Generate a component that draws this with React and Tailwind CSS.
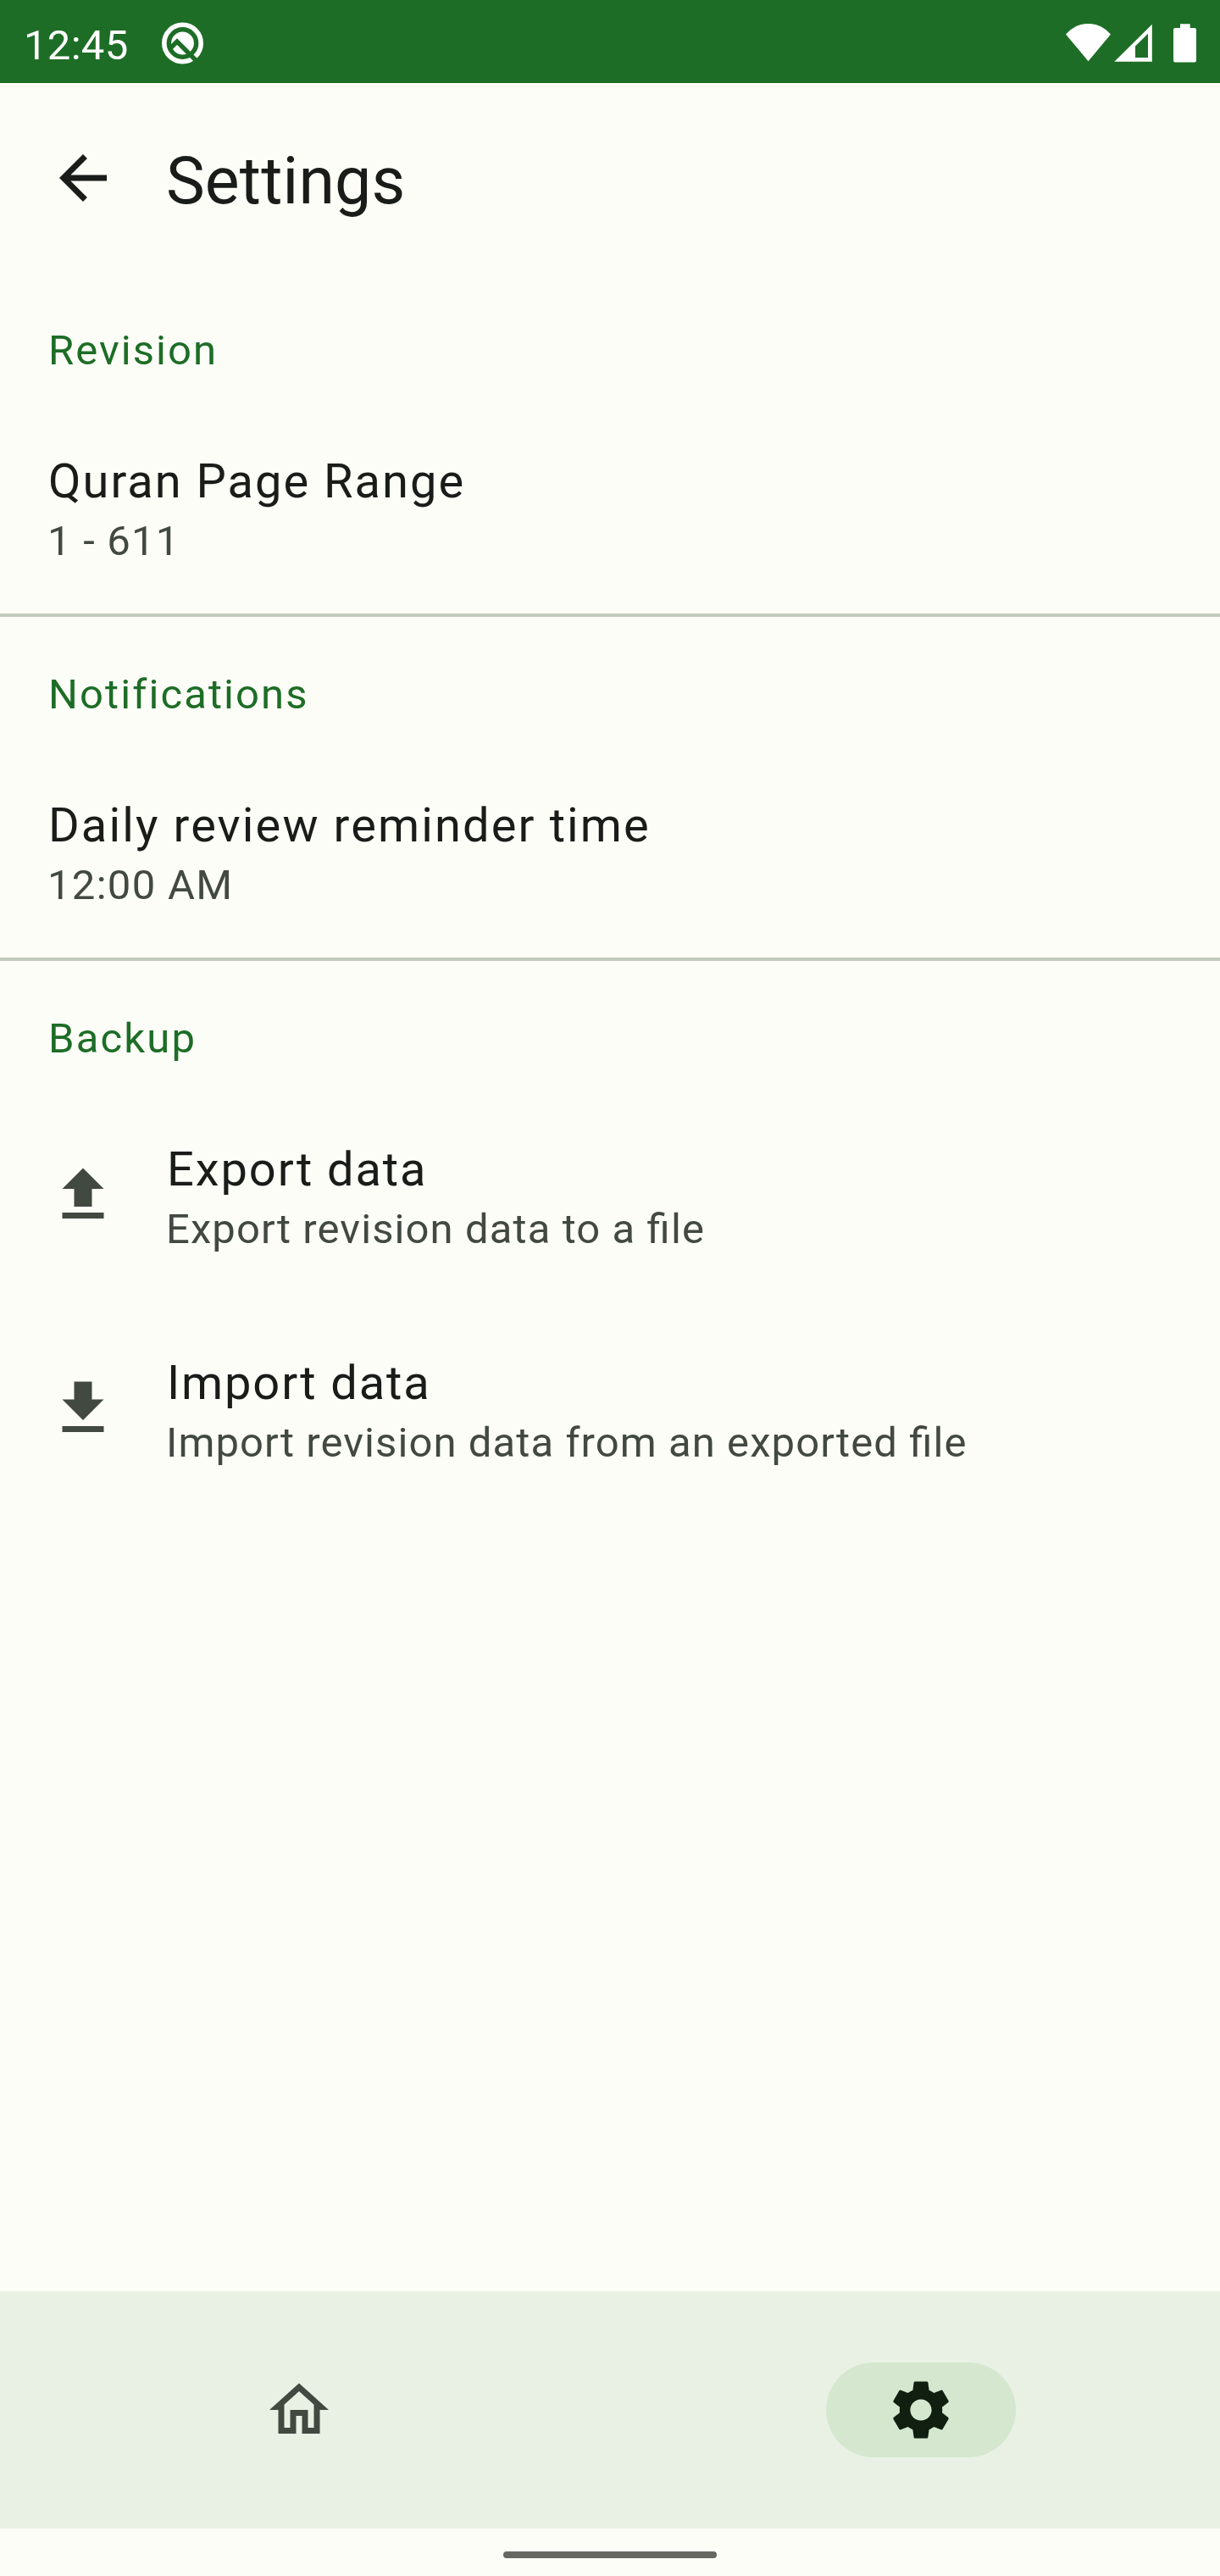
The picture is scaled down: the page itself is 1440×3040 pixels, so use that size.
function StatusBar() {
  return (
    <header className="flex h-[98px] items-start justify-between bg-[#1d6d26] text-white">
      <div className="flex items-start pl-[28px]">
        <span className="mt-[19px] w-[163px] text-[49px] leading-[70px] tracking-[0.3px]">12:45</span>
        <svg className="mt-[26px] h-[50px] w-[49px]" viewBox="0 0 49 50" fill="none">
          <circle cx="24.5" cy="25" r="21.7" stroke="currentColor" strokeWidth="5.6" />
          <circle cx="24.5" cy="25" r="13.4" fill="currentColor" />
          <path d="M10.5 30.5 18 23l28 28" stroke="#1d6d26" strokeWidth="5.4" />
        </svg>
      </div>
      <div className="flex items-start pr-[28px] pt-[28px]">
        <svg className="h-[45px] w-[53px]" viewBox="0 0 53 45" fill="currentColor">
          <path d="M0 12.4a34.3 34.3 0 0 1 53 0L26.5 44.3z" />
        </svg>
        <svg className="ml-[4px] h-[45px] w-[45px]" viewBox="0 0 45 45" fill="currentColor" fillRule="evenodd">
          <path d="M.3 44.7H44.8V.7zM25 26.5 40 11.7V40H25z" />
        </svg>
        <svg className="ml-[25px] h-[46px] w-[27px]" viewBox="0 0 27 46" fill="currentColor">
          <path d="M8 .3h11.7V5H25a2 2 0 0 1 2 2v36.6a2 2 0 0 1-2 2H2a2 2 0 0 1-2-2V7a2 2 0 0 1 2-2h6z" />
        </svg>
      </div>
    </header>
  );
}

function Icon({ path }) {
  return (
    <svg className="h-[84px] w-[84px] shrink-0" viewBox="0 0 24 24" fill="currentColor">
      <path d={path} />
    </svg>
  );
}

function SectionTitle({ children, tracking }) {
  return <h2 className={`h-[150px] pl-[57px] pt-[57px] text-[49px] leading-[70px] text-[#1d6d26] ${tracking}`}>{children}</h2>;
}

function Item({ icon, title, titleTracking, detail, detailTracking }) {
  return (
    <div className="flex h-[252px] items-start gap-14 px-14 text-[#424940]">
      {icon && (
        <div className="pt-[84px]">
          <Icon path={icon} />
        </div>
      )}
      <div className="flex-1 pt-[59px]">
        <p className={`pl-px text-[56px] leading-[74px] text-[#1a1c19] ${titleTracking}`}>{title}</p>
        <p className={`pt-px text-[49px] leading-[66px] [font-feature-settings:'liga'_1] ${detailTracking}`}>{detail}</p>
      </div>
    </div>
  );
}

function Divider() {
  return <hr className="h-[4px] border-0 bg-[#c2c9bd]" />;
}

const icons = {
  back: "M20 11H7.83l5.59-5.59L12 4l-8 8 8 8 1.41-1.41L7.83 13H20v-2z",
  upload: "M5 20h14v-2H5v2zM5 10h4v6h6v-6h4l-7-7-7 7z",
  download: "M19 9h-4V3H9v6H5l7 7 7-7zM5 18v2h14v-2H5z",
  home: "M12 5.69l5 4.5V18h-2v-6H9v6H7v-7.81l5-4.5M12 3L2 12h3v8h6v-6h2v6h6v-8h3L12 3z",
  settings:
    "M19.14 12.94c.04-.3.06-.61.06-.94 0-.32-.02-.64-.07-.94l2.03-1.58c.18-.14.23-.41.12-.61l-1.92-3.32c-.12-.22-.37-.29-.59-.22l-2.39.96c-.5-.38-1.03-.7-1.62-.94l-.36-2.54c-.04-.24-.24-.41-.48-.41h-3.84c-.24 0-.43.17-.47.41l-.36 2.54c-.59.24-1.13.57-1.62.94l-2.39-.96c-.22-.08-.47 0-.59.22L2.74 8.87c-.12.21-.08.47.12.61l2.03 1.58c-.05.3-.09.63-.09.94s.02.64.07.94l-2.03 1.58c-.18.14-.23.41-.12.61l1.92 3.32c.12.22.37.29.59.22l2.39-.96c.5.38 1.03.7 1.62.94l.36 2.54c.05.24.24.41.48.41h3.84c.24 0 .44-.17.47-.41l.36-2.54c.59-.24 1.13-.56 1.62-.94l2.39.96c.22.08.47 0 .59-.22l1.92-3.32c.12-.22.07-.47-.12-.61l-2.01-1.58zM12 15.6c-1.98 0-3.6-1.62-3.6-3.6s1.62-3.6 3.6-3.6 3.6 1.62 3.6 3.6-1.62 3.6-3.6 3.6z",
};

export default function App() {
  return (
    <div className="flex h-[3040px] w-[1440px] flex-col bg-[#fcfdf7] font-[Roboto,sans-serif] text-[#1a1c19]">
      <StatusBar />
      <div className="flex h-[224px] items-center gap-14 px-14">
        <Icon path={icons.back} />
        <h1 className="pt-[7px] text-[77px] leading-[98px] tracking-[0.15px]">Settings</h1>
      </div>
      <main className="flex-1">
        <SectionTitle tracking="tracking-[2.05px]">Revision</SectionTitle>
        <Item title="Quran Page Range" titleTracking="tracking-[2px]" detail="1 - 611" detailTracking="tracking-[1.22px]" />
        <Divider />
        <SectionTitle tracking="tracking-[2.1px]">Notifications</SectionTitle>
        <Item title="Daily review reminder time" titleTracking="tracking-[2.12px]" detail="12:00 AM" detailTracking="tracking-[1.3px]" />
        <Divider />
        <SectionTitle tracking="tracking-[2.15px]">Backup</SectionTitle>
        <Item icon={icons.upload} title="Export data" titleTracking="tracking-[1.92px]" detail="Export revision data to a file" detailTracking="tracking-[1.1px]" />
        <Item icon={icons.download} title="Import data" titleTracking="tracking-[1.86px]" detail="Import revision data from an exported file" detailTracking="tracking-[1.08px]" />
      </main>
      <nav className="flex h-[280px] gap-7 bg-[#e9f1e5]">
        <div className="flex flex-1 items-center justify-center text-[#424940]">
          <Icon path={icons.home} />
        </div>
        <div className="flex flex-1 items-center justify-center text-[#101f10]">
          <div className="flex h-[112px] w-[224px] items-center justify-center rounded-full bg-[#d5e8cf]">
            <Icon path={icons.settings} />
          </div>
        </div>
      </nav>
      <div className="flex h-[56px] justify-center pt-[27px]">
        <div className="h-[8px] w-[252px] rounded-full bg-[#666762]" />
      </div>
    </div>
  );
}
